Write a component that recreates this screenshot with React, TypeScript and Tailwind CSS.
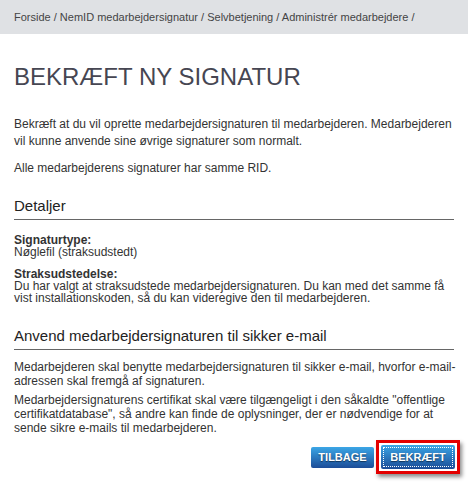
import React from 'react';

const crumbs = ['Forside', 'NemID medarbejdersignatur', 'Selvbetjening', 'Administrér medarbejdere'];

const SectionHeading: React.FC<{ children: React.ReactNode }> = ({ children }) => (
    <h2 className="text-[15px] leading-[18px] text-[#222] pb-[4px] border-b border-[#666]">{children}</h2>
);

const buttonStyle =
    'rounded-[2px] bg-gradient-to-b from-[#3ba6e6] to-[#1d4d98] text-white font-bold text-[11px] [text-shadow:0_1px_1px_rgba(0,0,0,0.5)]';

const ConfirmSignature: React.FC = () => {
    return (
        <div className="w-[468px] h-[489px] bg-white text-[12px] text-[#333] font-['Liberation_Sans',Arial,sans-serif] overflow-hidden">
            <div className="h-[34px] bg-[#dfe1e4] px-[14px] flex items-center text-[11px] text-[#444] whitespace-nowrap">
                <span>{crumbs.map((c) => `${c} / `).join('')}</span>
            </div>

            <div className="px-[14px]">
                <h1 className="mt-[28px] text-[24px] leading-[30px] text-[#464652]">BEKRÆFT NY SIGNATUR</h1>

                <p className="mt-[24px] leading-[17px]">
                    Bekræft at du vil oprette medarbejdersignaturen til medarbejderen. Medarbejderen vil kunne anvende sine øvrige signaturer som normalt.
                </p>
                <p className="mt-[10px] leading-[17px]">Alle medarbejderens signaturer har samme RID.</p>

                <div className="mt-[20px]">
                    <SectionHeading>Detaljer</SectionHeading>
                </div>

                <dl className="mt-[14px] leading-[12px]">
                    <dt className="font-bold">Signaturtype:</dt>
                    <dd>Nøglefil (straksudstedt)</dd>
                    <dt className="font-bold mt-[10px]">Straksudstedelse:</dt>
                    <dd>Du har valgt at straksudstede medarbejdersignaturen. Du kan med det samme få vist installationskoden, så du kan videregive den til medarbejderen.</dd>
                </dl>

                <div className="mt-[23px]">
                    <SectionHeading>Anvend medarbejdersignaturen til sikker e-mail</SectionHeading>
                </div>

                <p className="mt-[10px] -mr-[8px] leading-[14px]">
                    Medarbejderen skal benytte medarbejdersignaturen til sikker e-mail, hvorfor e&#8209;mail-adressen skal fremgå af signaturen.
                </p>
                <p className="mt-[5px] leading-[14px]">
                    Medarbejdersignaturens certifikat skal være tilgængeligt i den såkaldte "offentlige certifikatdatabase", så andre kan finde de oplysninger, der er nødvendige for at sende sikre e-mails til medarbejderen.
                </p>

                <div className="mt-[5px] -mr-[6px] flex justify-end items-center gap-[2px]">
                    <button className={`h-[21px] w-[63px] ${buttonStyle}`}>TILBAGE</button>
                    <div className="border-[3px] border-[#e30000] p-[2px] shadow-[2px_3px_4px_rgba(0,0,0,0.45)]">
                        <button className={`h-[24px] w-[74px] outline-1 outline-dotted outline-white -outline-offset-[3px] ${buttonStyle}`}>
                            BEKRÆFT
                        </button>
                    </div>
                </div>
            </div>
        </div>
    );
};

export default function App() {
    return <ConfirmSignature />;
}
